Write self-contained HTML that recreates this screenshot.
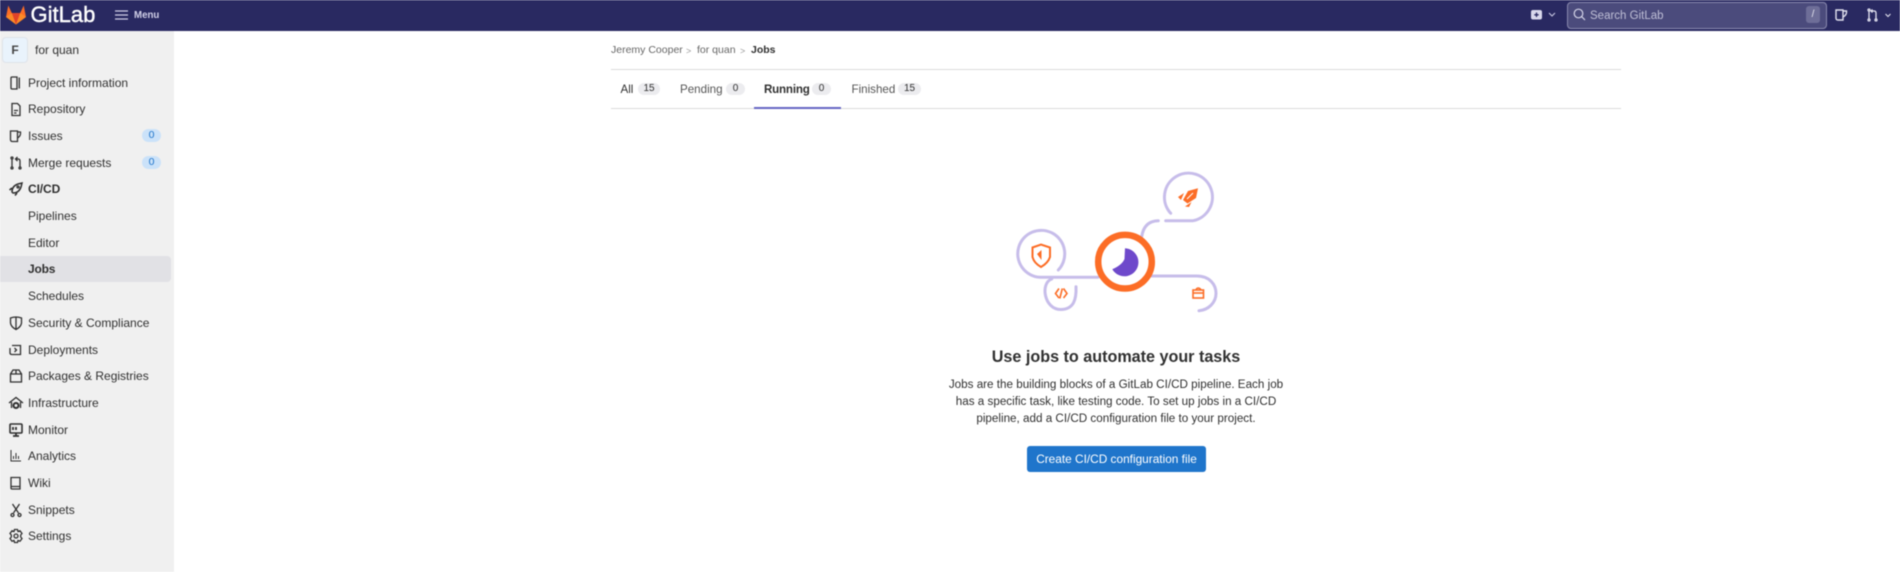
<!DOCTYPE html>
<html><head><meta charset="utf-8"><style>
html,body{margin:0;padding:0;width:1900px;height:572px;overflow:hidden;background:#fff;font-family:"Liberation Sans",sans-serif;color:#303030}
#w{position:absolute;left:0;top:0;width:1900px;height:572px;overflow:hidden;filter:blur(.4px)}
.a{position:absolute;white-space:nowrap}
#top{left:0;top:0;width:1900px;height:31px;background:#292961}
#side{left:0;top:31px;width:174px;height:541px;background:#f0f0f0}
.r{position:absolute;left:28px;font-size:12px;line-height:16px;color:#303030;white-space:nowrap}
.i{position:absolute;left:8px;width:16px;height:16px;fill:none;stroke:#303030;stroke-width:1.3}
.b{position:absolute;left:142px;width:19px;height:13px;border-radius:7px;background:#cbe2f9;color:#1f75cb;font-size:10.500px;line-height:13px;text-align:center}
.t{font-size:11.600px;line-height:16px;top:82px}
.c{position:absolute;top:83px;height:12px;border-radius:6px;background:#ececef;font-size:10px;line-height:12px;text-align:center;color:#303030}
</style></head><body><div id="w">
<div class="a" id="top"></div>
<svg class="a" style="left:5px;top:4px" width="22" height="22" viewBox="0 0 22 22"><path d="M11 20.500 1 13 3.300 1.500 6.800 9H15.200L18.700 1.500 21 13Z" fill="#fc6d26"/><path d="M11 20.500 6.800 9H15.200Z" fill="#e24329"/><path d="M1 13 6.800 9 11 20.500ZM21 13 15.200 9 11 20.500Z" fill="#fca326" opacity=".55"/></svg>
<div class="a" style="left:30.500px;top:2px;font-size:22px;line-height:26px;font-weight:400;color:#fff;-webkit-text-stroke:.4px #fff">GitLab</div>
<svg class="a" style="left:115px;top:9px" width="14" height="12"><path d="M0 2H13M0 6H13M0 10H13" stroke="#d1d0e8" stroke-width="1.200"/></svg>
<div class="a" style="left:134px;top:8px;font-size:9.700px;line-height:15px;font-weight:700;color:#d1d0e8">Menu</div>
<svg class="a" style="left:1530px;top:8px" width="30" height="14"><rect x="1" y="2" width="11" height="9.500" rx="2" fill="#d9d8ec"/><path d="M6.500 4.500V9M4.300 6.800H8.700" stroke="#292961" stroke-width="1.300"/><path d="M19 5l3 3 3-3" fill="none" stroke="#c9c8e2" stroke-width="1.100"/></svg>
<div class="a" style="left:1567px;top:2px;width:258px;height:25px;border:1px solid #8a8aae;border-radius:4px;background:#4b4b7c"></div>
<svg class="a" style="left:1573px;top:8px" width="14" height="14" fill="none" stroke="#d5d5e8" stroke-width="1.200"><circle cx="5.500" cy="5.500" r="4.300"/><path d="M8.700 8.700 12 12"/></svg>
<div class="a" style="left:1590px;top:7.500px;font-size:11.500px;line-height:16px;color:#bfbfd6">Search GitLab</div>
<div class="a" style="left:1806px;top:6px;width:14px;height:17px;border-radius:3px;background:#6e6e98;color:#e5e5f0;font-size:10px;line-height:17px;text-align:center">/</div>
<svg class="a" style="left:1834px;top:7px" width="16" height="16" fill="none" stroke="#e3e3f0" stroke-width="1.400"><path d="M2 3H9V13H4Q2 13 2 11ZM9 4H12.500Q13 8 9 10"/></svg>
<svg class="a" style="left:1866px;top:8px" width="28" height="15" fill="none" stroke="#e3e3f0" stroke-width="1.300"><path d="M3 3V11M10 11V5Q10 3 8 3H6M6.500 1.500 5 3l1.500 1.500"/><circle cx="3" cy="2" r="1"/><circle cx="3" cy="12" r="1"/><circle cx="10" cy="12" r="1"/><path d="M19.500 6l2.500 2.500 2.500-2.500" stroke-width="1.100"/></svg>

<div class="a" id="side"></div>
<div class="a" style="left:2px;top:37px;width:24px;height:24px;border:1px solid #dfe3ea;border-radius:4px;background:#e9f3fc;text-align:center;font-size:12px;line-height:24px;font-weight:700;color:#444">F</div>
<div class="a" style="left:35px;top:42px;font-size:12px;line-height:16px">for quan</div>
<div class="a" style="left:0;top:256px;width:171px;height:26px;border-radius:0 4px 4px 0;background:#e1e1e5"></div>

<svg class="i" style="top:75px" viewBox="0 0 16 16"><path d="M4 2H9V14H4Q3 14 3 13V3Q3 2 4 2ZM11.300 2.500V13.500"/></svg><div class="r" style="top:75px">Project information</div>
<svg class="i" style="top:101px" viewBox="0 0 16 16"><path d="M4 2.500H9.500L12 5V14.500H4ZM6 9.500H10M6 12H8.500"/></svg><div class="r" style="top:101px">Repository</div>
<svg class="i" style="top:128px" viewBox="0 0 16 16"><path d="M2.500 3H9.500V13.500H4.500Q2.500 13.500 2.500 11.500ZM9.500 4H12.500Q13 8 9.500 10"/></svg><div class="r" style="top:128px">Issues</div><div class="b" style="top:129px">0</div>
<svg class="i" style="top:155px" viewBox="0 0 16 16"><path d="M4 4V12M12 12V6Q12 4 10 4H8.500M9.500 2 7.500 4l2 2"/><circle cx="4" cy="3" r="1"/><circle cx="4" cy="13" r="1"/><circle cx="12" cy="13" r="1"/></svg><div class="r" style="top:155px">Merge requests</div><div class="b" style="top:156px">0</div>
<svg class="i" style="top:181px" viewBox="0 0 16 16"><path d="M4 11Q4 5 10 3L14 2 13 6Q11 12 5 12ZM1.500 9 4 7M7 14.500 9 12" stroke-width="1.500"/><circle cx="10" cy="6" r="1"/></svg><div class="r" style="top:181px;font-weight:700;letter-spacing:-.1px">CI/CD</div>
<div class="r" style="top:208px">Pipelines</div>
<div class="r" style="top:235px">Editor</div>
<div class="r" style="top:261px;font-weight:700;letter-spacing:-.2px">Jobs</div>
<div class="r" style="top:288px">Schedules</div>
<svg class="i" style="top:315px" viewBox="0 0 16 16"><path d="M2.500 3Q8 1 13.500 3V8Q13 12 8 14.500 3 12 2.500 8ZM8 2V14"/></svg><div class="r" style="top:315px">Security &amp; Compliance</div>
<svg class="i" style="top:342px" viewBox="0 0 16 16"><path d="M4 3.500H12.500V12.500H4Q2 12.500 2 11V6M6.500 6l2 2-2 2"/></svg><div class="r" style="top:342px">Deployments</div>
<svg class="i" style="top:368px" viewBox="0 0 16 16"><path d="M2.500 6H13.500V14H2.500ZM2.500 6 5 2H11L13.500 6M8 2V6"/></svg><div class="r" style="top:368px">Packages &amp; Registries</div>
<svg class="i" style="top:395px" viewBox="0 0 16 16"><path d="M1 8 8 2.500 15 8M3.500 7V13M12.500 7V13"/><circle cx="8" cy="10.500" r="2.500" stroke-width="2"/></svg><div class="r" style="top:395px">Infrastructure</div>
<svg class="i" style="top:422px" viewBox="0 0 16 16"><rect x="2" y="2" width="12" height="9" rx="1" stroke-width="1.600"/><path d="M5 14H11M8 11V14M5 5V8M8 5V8" stroke-width="1.800"/></svg><div class="r" style="top:422px">Monitor</div>
<svg class="i" style="top:448px" viewBox="0 0 16 16"><path d="M3 2V13H13M5.500 8V11M8 5V11M10.500 8V11" stroke-width="1"/></svg><div class="r" style="top:448px">Analytics</div>
<svg class="i" style="top:475px" viewBox="0 0 16 16"><path d="M3 2.500H12V14H4Q3 14 3 13ZM3 11.500H12"/></svg><div class="r" style="top:475px">Wiki</div>
<svg class="i" style="top:502px" viewBox="0 0 16 16"><path d="M4.500 2 10.500 11M11.500 2 5.500 11"/><circle cx="4.500" cy="13" r="1.500"/><circle cx="11.500" cy="13" r="1.500"/></svg><div class="r" style="top:502px">Snippets</div>
<svg class="i" style="top:528px" viewBox="0 0 16 16"><path d="M6.500 1.500H9.500L10 3.500 12 2.800 14 5.500 12.700 7V9L14 10.500 12 13.200 10 12.500 9.500 14.500H6.500L6 12.500 4 13.200 2 10.500 3.300 9V7L2 5.500 4 2.800 6 3.500Z"/><circle cx="8" cy="8" r="2"/></svg><div class="r" style="top:528px">Settings</div>

<div class="a" style="left:611px;top:42px;font-size:10.500px;line-height:16px;color:#666">Jeremy Cooper</div>
<div class="a" style="left:686px;top:43px;font-size:9px;line-height:16px;color:#999">&gt;</div>
<div class="a" style="left:697px;top:42px;font-size:10.500px;line-height:16px;color:#666">for quan</div>
<div class="a" style="left:740px;top:43px;font-size:9px;line-height:16px;color:#999">&gt;</div>
<div class="a" style="left:751px;top:42px;font-size:10.500px;line-height:16px;font-weight:700;color:#303030">Jobs</div>
<div class="a" style="left:611px;top:69px;width:1010px;height:1px;background:#dbdbdb"></div>
<div class="a" style="left:611px;top:108px;width:1010px;height:1px;background:#dbdbdb"></div>
<div class="a" style="left:754px;top:107px;width:87px;height:2px;background:#6666c4"></div>
<div class="a t" style="left:620.500px">All</div><div class="c" style="left:638px;width:22px">15</div>
<div class="a t" style="left:680px;color:#555">Pending</div><div class="c" style="left:726px;width:19px">0</div>
<div class="a t" style="left:764px;font-weight:700;letter-spacing:-.2px">Running</div><div class="c" style="left:812px;width:19px">0</div>
<div class="a t" style="left:851.500px;color:#555">Finished</div><div class="c" style="left:898px;width:23px">15</div>

<svg class="a" style="left:1000px;top:160px" width="240" height="170" viewBox="1000 160 240 170" fill="none">
<g stroke="#c7bdea" stroke-width="3" stroke-linecap="round">
<path d="M1170.700 213.300A24 24 0 1 1 1193 220.700H1165.700"/>
<path d="M1158.300 220.700Q1144 221 1141.700 236.700"/>
<path d="M1058.300 270A23.500 23.500 0 1 0 1040 277.300H1098"/>
<path d="M1051.700 279C1040 283 1044 309.500 1060.700 309.500C1074 309.500 1076.500 299 1076 286.700"/>
<path d="M1151.700 276H1196.700C1210 276 1216 285 1216 293.300C1216 303 1208 310 1199 310.700"/>
</g>
<circle cx="1125" cy="261.700" r="26.800" fill="#fff" stroke="#fc6d26" stroke-width="6.500"/>
<path d="M1125 248.300A14 14 0 1 1 1112.300 269.300Q1122 265 1124.500 259Z" fill="#6e49cb"/>
<path d="M1032.500 247.500 1041 244.500 1050 247.500V257Q1048 263 1041 267 1034 263 1032.500 257Z" stroke="#fc6d26" stroke-width="2"/>
<path d="M1041.500 250V260L1037 254Z" fill="#fc6d26"/>
<path d="M1059 288.500 1055.500 293.500 1059 298M1062.300 288.500 1059.800 298.500M1063.500 288.500 1067 293.500 1063.500 298" stroke="#fc6d26" stroke-width="1.600"/>
<path d="M1198 188.300 1188 191 1183 200 1187.500 203.500 1196 198ZM1178 197 1184 193 1181 200ZM1185 206.500 1191.500 202 1189 207Z" fill="#fc6d26"/>
<path d="M1187 199 1193 193" stroke="#fff" stroke-width="1"/>
<rect x="1193" y="290" width="10.500" height="8" stroke="#fc6d26" stroke-width="1.600"/>
<path d="M1193 293H1203.500" stroke="#fc6d26" stroke-width="1.600"/>
<path d="M1196 289.500Q1198 286.500 1201 289.500" stroke="#fc6d26" stroke-width="1.500"/>
</svg>

<div class="a" style="left:930px;top:346px;width:372px;text-align:center;font-size:16.150px;line-height:22px;font-weight:700;color:#303030">Use jobs to automate your tasks</div>
<div class="a" style="left:930px;top:375.500px;width:372px;text-align:center;font-size:11.670px;line-height:17px;color:#303030">Jobs are the building blocks of a GitLab CI/CD pipeline. Each job<br>has a specific task, like testing code. To set up jobs in a CI/CD<br>pipeline, add a CI/CD configuration file to your project.</div>
<div class="a" style="left:1027px;top:446px;width:179px;height:26px;border-radius:3px;background:#1f75cb;color:#fff;text-align:center;font-size:11.850px;line-height:26px">Create CI/CD configuration file</div>
</div></body></html>
